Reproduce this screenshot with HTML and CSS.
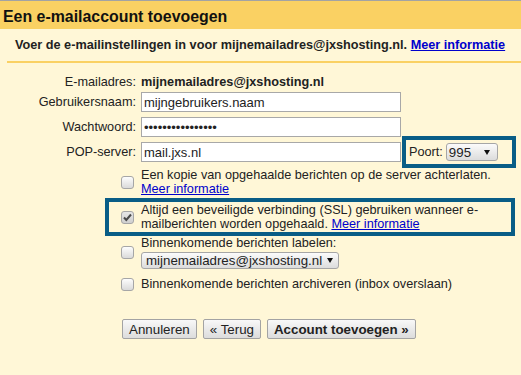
FILE: index.html
```html
<!DOCTYPE html>
<html lang="nl">
<head>
  <meta charset="UTF-8" />
  <meta name="viewport" content="width=device-width, initial-scale=1.0"/>
  <title>Een e-mailaccount toevoegen</title>
  <link rel="stylesheet" href="styles.css">
</head>
<body>
  <div class="dialog">
    <header class="dialog-header">
      <h1>Een e-mailaccount toevoegen</h1>
    </header>
    <p class="intro">Voer de e-mailinstellingen in voor mijnemailadres@jxshosting.nl. <a href="#">Meer informatie</a></p>
    <hr class="divider">

    <div class="form">
      <div class="row row-email">
        <span class="label">E-mailadres:</span>
        <strong>mijnemailadres@jxshosting.nl</strong>
      </div>
      <div class="row row-field">
        <label class="label" for="user">Gebruikersnaam:</label>
        <input class="field" id="user" type="text" value="mijngebruikers.naam">
      </div>
      <div class="row row-field">
        <label class="label" for="pass">Wachtwoord:</label>
        <input class="field" id="pass" type="password" value="wachtwoord123456">
      </div>
      <div class="row row-field row-pop">
        <label class="label" for="pop">POP-server:</label>
        <input class="field" id="pop" type="text" value="mail.jxs.nl">
        <span class="port">Poort: <span class="select select-port">995<i class="arrow"></i></span></span>
      </div>

      <div class="row check-row row-copy">
        <span class="label"><span class="checkbox"></span></span>
        <span class="check-text">Een kopie van opgehaalde berichten op de server achterlaten.<br><a href="#">Meer informatie</a></span>
      </div>
      <div class="row check-row row-ssl">
        <span class="label"><span class="checkbox checked">
          <svg width="11" height="11" viewBox="0 0 11 11"><path d="M2 5.5 L4.3 8 L9 2.5" fill="none" stroke="#4a4a4a" stroke-width="2"/></svg>
        </span></span>
        <span class="check-text">Altijd een beveiligde verbinding (SSL) gebruiken wanneer e-<br>mailberichten worden opgehaald. <a href="#">Meer informatie</a></span>
      </div>
      <div class="row check-row row-tag">
        <span class="label"><span class="checkbox"></span></span>
        <span class="check-text">Binnenkomende berichten labelen:
          <span class="select select-tag">mijnemailadres@jxshosting.nl<i class="arrow"></i></span>
        </span>
      </div>
      <div class="row check-row row-archive">
        <span class="label"><span class="checkbox"></span></span>
        <span class="check-text">Binnenkomende berichten archiveren (inbox overslaan)</span>
      </div>

      <div class="buttons">
        <button class="btn">Annuleren</button>
        <button class="btn">&laquo; Terug</button>
        <button class="btn btn-primary">Account toevoegen &raquo;</button>
      </div>
    </div>
  </div>
</body>
</html>
```

FILE: styles.css
```css
* { margin: 0; padding: 0; box-sizing: border-box; }
body {
  background: #fff7d7;
  font-family: "Liberation Sans", Arial, sans-serif;
  font-size: 12.7px;
  color: #222;
}
a { color: #0000cc; }
.dialog {
  border-top: 1px solid #a3a3a3;
}
.dialog-header {
  background: #fad163;
  height: 28px;
  padding: 4px 0 0 3px;
}
.dialog-header h1 {
  font-size: 15.9px;
  line-height: 24px;
  color: #111;
}
.intro {
  padding: 9px 0 8px 15px;
  font-weight: bold;
  line-height: 15px;
}
.divider {
  margin-left: 7px;
  border: 0;
  height: 2px;
  background: #fad163;
}
.form {
  padding-top: 9px;
}
.row {
  display: flex;
  align-items: center;
}
.label {
  width: 136px;
  flex: none;
  margin-right: 5px;
  display: flex;
  justify-content: flex-end;
}
.row-email { height: 20px; }
.row-field {
  height: 20px;
  margin-top: 5px;
}
.row-email + .row-field { margin-top: 0; }
.field {
  width: 260px;
  height: 20px;
  border: 1px solid #a8a8a8;
  background: #fff;
  padding: 0 2px;
  font-family: "Liberation Sans", Arial, sans-serif;
  font-size: 13px;
  color: #222;
  outline: none;
}
.port {
  display: inline-flex;
  align-items: center;
  gap: 3px;
  border: 4px solid #095d86;
  padding: 3px 14px 3px 3px;
  margin: -6px 0 -6px 1px;
}
.select {
  display: inline-flex;
  align-items: center;
  border: 1px solid #a6a6a6;
  border-radius: 3px;
  background: linear-gradient(#fbfbfb, #dcdcdc);
  font-size: 13.3px;
  color: #222;
}
.select-port {
  width: 52px;
  height: 18px;
  padding-left: 2px;
}
.select-port .arrow { margin-right: 7px; }
.select-tag {
  width: 198px;
  height: 17px;
  padding-left: 4px;
  margin-top: 2px;
}
.select-tag .arrow { margin-right: 5px; }
.arrow {
  width: 0;
  height: 0;
  margin-left: auto;
  border-left: 3px solid transparent;
  border-right: 3px solid transparent;
  border-top: 5px solid #111;
}
.check-row { line-height: 14px; }
.check-text {
  display: flex;
  flex-direction: column;
  align-items: flex-start;
}
.check-text { display: block; }
.row-tag .check-text { display: flex; }
.checkbox {
  width: 13px;
  height: 13px;
  margin-right: 2px;
  border: 1px solid #a6a6a6;
  border-radius: 3px;
  background: linear-gradient(#fdfdfd, #dadada);
  display: flex;
  align-items: center;
  justify-content: center;
}
.checkbox.checked {
  background: linear-gradient(#e6e6e6, #cfcfcf);
}
.row-copy { margin-top: 6px; }
.row-ssl {
  position: relative;
  margin-top: 7px;
}
.row-ssl::after {
  content: "";
  position: absolute;
  left: 105px;
  right: 6px;
  top: -5px;
  bottom: -5px;
  border: 4px solid #095d86;
}
.row-tag { margin-top: 5px; }
.row-archive { margin-top: 8px; }
.buttons {
  display: flex;
  gap: 6px;
  margin-top: 28px;
  padding-left: 122px;
}
.btn {
  height: 20px;
  padding: 0 6px;
  border: 1px solid #a3a3a3;
  border-radius: 2px;
  background: linear-gradient(#f8f8f8, #dcdcdc);
  font-family: "Liberation Sans", Arial, sans-serif;
  font-size: 13.33px;
  color: #222;
}
.btn-primary { font-weight: bold; }
```
